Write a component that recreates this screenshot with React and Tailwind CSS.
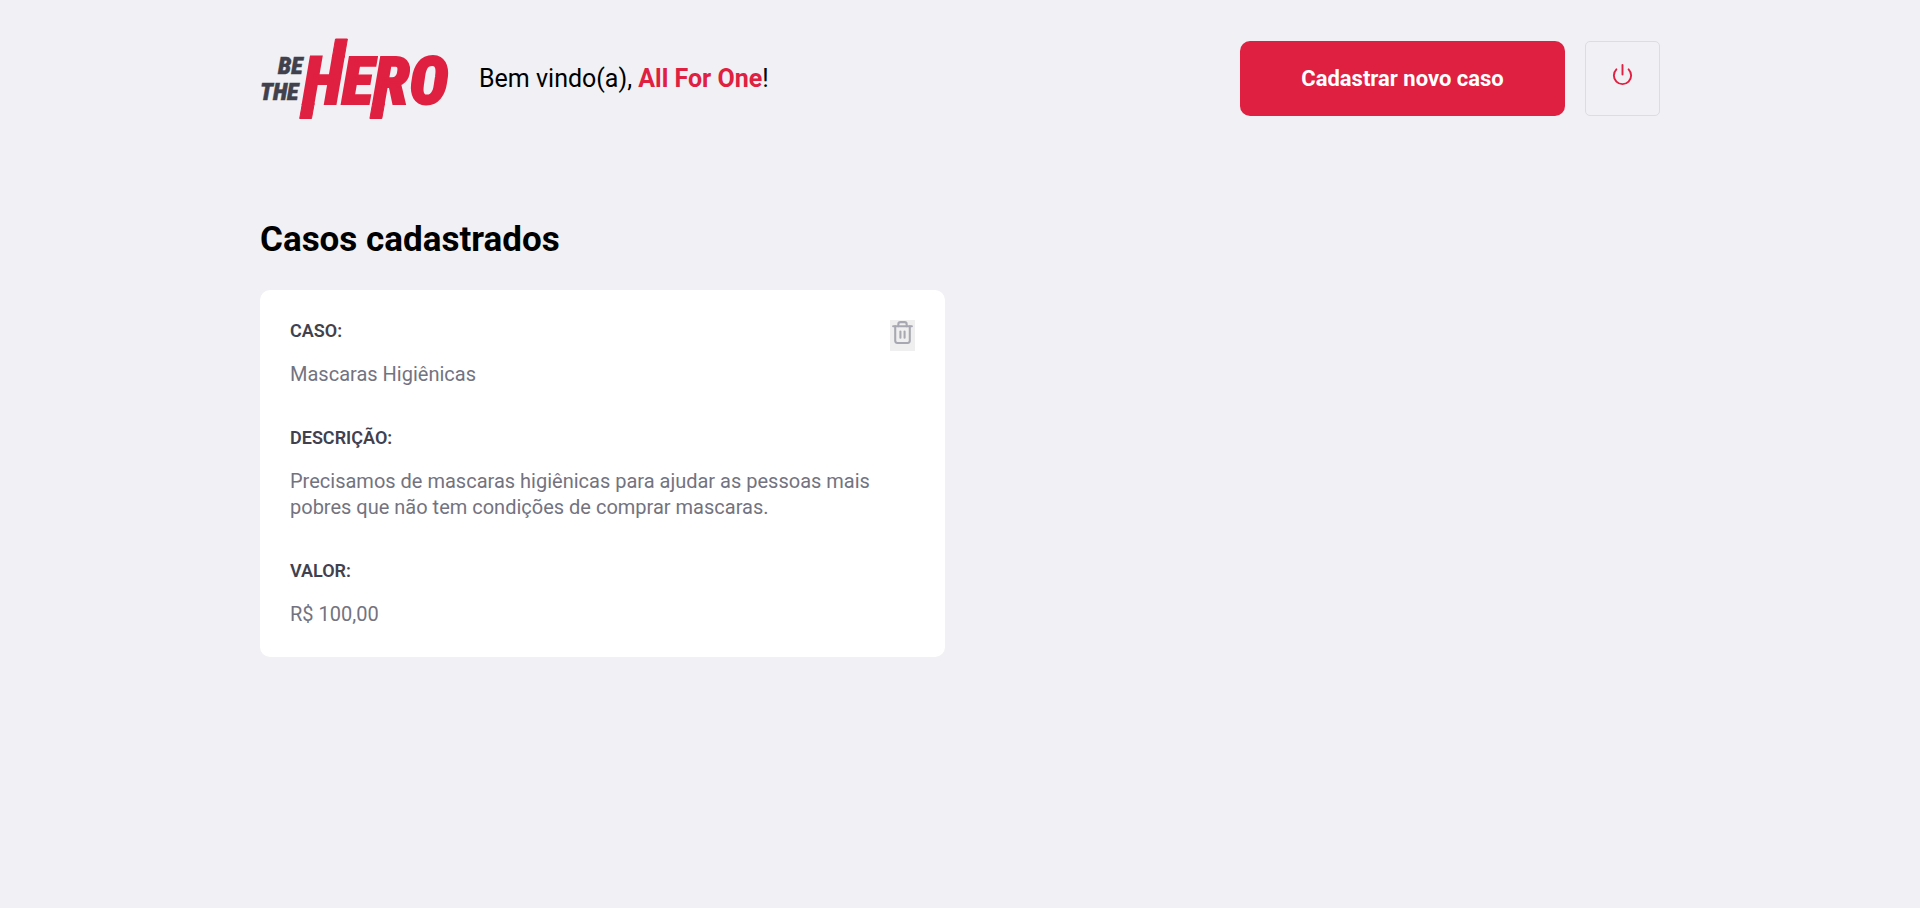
import React from "react";
import { FiPower, FiTrash2 } from "react-icons/fi";

const incidents = [
  {
    id: 1,
    title: "Mascaras Higiênicas",
    description:
      "Precisamos de mascaras higiênicas para ajudar as pessoas mais pobres que não tem condições de comprar mascaras.",
    value: "R$ 100,00",
  },
];

function Logo() {
  return (
    <svg className="h-20 w-[189px] shrink-0 overflow-visible" viewBox="0 0 189 80" role="img" aria-label="Be The Hero">
      <g fill="#41414d" stroke="#41414d" strokeWidth="0.5" className="font-['Roboto_Condensed',sans-serif] font-black italic">
        <text x="18" y="35" fontSize="24">BE</text>
        <text x="0" y="61" fontSize="24">THE</text>
      </g>
      <g fill="#e02041" stroke="#e02041">
        <text x="43" y="65" fontSize="66" strokeWidth="2" className="font-['Roboto_Condensed',sans-serif] font-black italic">HERO</text>
        {/* slanted bars that run past the word above and below */}
        <path strokeWidth="1" d="M42.4 64.5H54.2L51.5 79.5H39.7ZM72.3 18.5L75.5 0H87.4L84.2 18.5ZM112.6 64.5H124.5L121.8 79.5H109.9Z" />
      </g>
    </svg>
  );
}

function Field({ label, children }) {
  return (
    <div>
      <dt className="mb-5 text-lg leading-[21px] font-semibold text-[#41414d] uppercase">{label}</dt>
      <dd className="text-xl leading-[26px] text-[#737380]">{children}</dd>
    </div>
  );
}

function IncidentCard({ incident }) {
  return (
    <li className="flex items-start rounded-[10px] bg-white p-[30px]">
      <dl className="flex min-w-0 flex-1 flex-col gap-10">
        <Field label="Caso:">{incident.title}</Field>
        <Field label="Descrição:">{incident.description}</Field>
        <Field label="Valor:">{incident.value}</Field>
      </dl>
      <button type="button" aria-label="Excluir caso" className="shrink-0 cursor-pointer bg-[#efefef] pb-1.5 hover:opacity-80">
        <FiTrash2 size={25} color="#a8a8b3" />
      </button>
    </li>
  );
}

export default function App() {
  return (
    <div className="min-h-screen bg-[#f0f0f5] font-[Roboto,sans-serif] text-black">
      <div className="mx-auto max-w-[1460px] px-[30px] pt-[38px] pb-10">
        <header className="flex min-h-[81px] flex-wrap items-center gap-5">
          <div className="flex items-center gap-[30px]">
            <Logo />
            <p className="text-[25px] leading-8">
              Bem vindo(a), <strong className="font-bold text-[#e02041]">All For One</strong>!
            </p>
          </div>
          <a href="#novo" className="ml-auto flex h-[75px] w-[325px] items-center justify-center rounded-[10px] bg-[#e02041] text-[22px] font-bold text-white hover:brightness-90">
            Cadastrar novo caso
          </a>
          <button type="button" aria-label="Sair" className="flex size-[75px] cursor-pointer items-center justify-center rounded-[5px] border border-[#dcdce6] pb-2">
            <FiPower size={23} color="#e02041" />
          </button>
        </header>
        <main>
          <h1 className="mt-[100px] mb-[30px] text-[35px] leading-[41px] font-bold">Casos cadastrados</h1>
          <ul className="grid grid-cols-1 gap-[30px] lg:grid-cols-2">
            {incidents.map((incident) => (
              <IncidentCard key={incident.id} incident={incident} />
            ))}
          </ul>
        </main>
      </div>
    </div>
  );
}
